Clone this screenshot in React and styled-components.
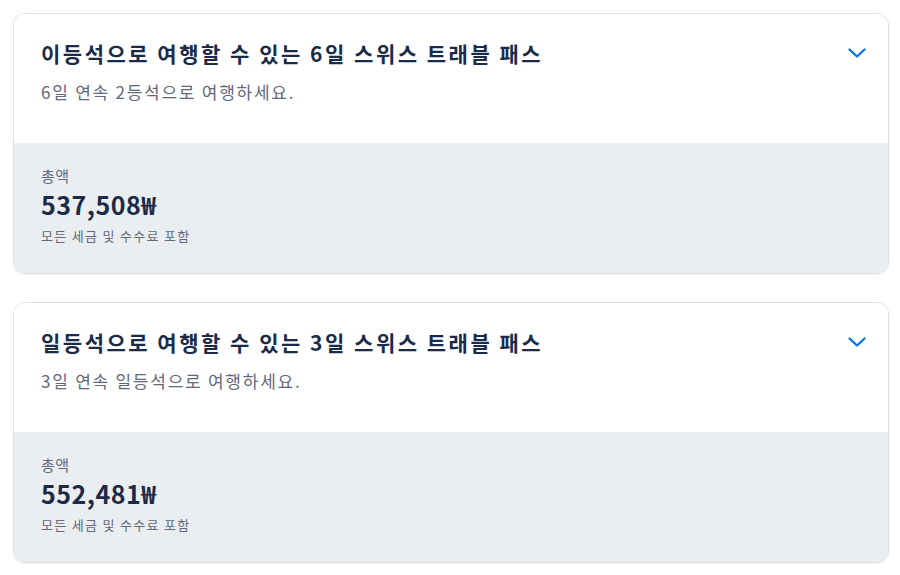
import React from "react";
import styled, { createGlobalStyle } from "styled-components";

const Global = createGlobalStyle`
  html, body { margin: 0; padding: 0; background: #fff; }
  body { font-family: "Noto Sans CJK KR", "Noto Sans", sans-serif; }
`;

const Page = styled.div`
  display: flex;
  flex-direction: column;
  gap: 28px;
  padding: 13px 11px 13px 13px;
`;

const Card = styled.div`
  border: 1px solid #dcdfe4;
  border-radius: 12px;
  overflow: hidden;
  box-shadow: 0 1px 2px rgba(26, 43, 73, 0.06);
`;

const Header = styled.div`
  display: flex;
  justify-content: space-between;
  align-items: flex-start;
  background: #fff;
  height: 129px;
  box-sizing: border-box;
  padding: 24px 19px 0 27px;
`;

const Texts = styled.div`
  display: flex;
  flex-direction: column;
  gap: 12px;
`;

const Title = styled.div`
  font-size: 21px;
  font-weight: 700;
  color: #1a2b49;
  line-height: 30px;
  letter-spacing: 2.5px;
`;

const Sub = styled.div`
  font-size: 17px;
  color: #63687a;
  line-height: 24px;
  letter-spacing: 1.75px;
`;

const Chevron = styled.svg`
  width: 24px;
  height: 24px;
  margin-top: 3px;
  color: #0071eb;
`;

const Footer = styled.div`
  background: #ebeef1;
  height: 130px;
  box-sizing: border-box;
  padding: 22px 27px 0;
  display: flex;
  flex-direction: column;
`;

const Label = styled.div`
  font-size: 15px;
  color: #63687a;
  line-height: 22px;
  letter-spacing: 0.5px;
`;

const Price = styled.div`
  font-size: 25px;
  font-weight: 700;
  color: #1a2b49;
  line-height: 32px;
  letter-spacing: 0.5px;
  margin-top: 1px;
`;

const Note = styled.div`
  font-size: 13px;
  color: #63687a;
  line-height: 18px;
  margin-top: 7px;
  letter-spacing: 1.3px;
`;

const items = [
  {
    title: "이등석으로 여행할 수 있는 6일 스위스 트래블 패스",
    sub: "6일 연속 2등석으로 여행하세요.",
    price: "537,508₩",
  },
  {
    title: "일등석으로 여행할 수 있는 3일 스위스 트래블 패스",
    sub: "3일 연속 일등석으로 여행하세요.",
    price: "552,481₩",
  },
];

export default function App() {
  return (
    <>
      <Global />
      <Page>
        {items.map((it) => (
          <Card key={it.title}>
            <Header>
              <Texts>
                <Title>{it.title}</Title>
                <Sub>{it.sub}</Sub>
              </Texts>
              <Chevron viewBox="0 0 24 24" fill="none" stroke="currentColor" strokeWidth="2.2" strokeLinecap="round" strokeLinejoin="round">
                <path d="M4.5 8.5l7.5 7 7.5-7" />
              </Chevron>
            </Header>
            <Footer>
              <Label>총액</Label>
              <Price>{it.price}</Price>
              <Note>모든 세금 및 수수료 포함</Note>
            </Footer>
          </Card>
        ))}
      </Page>
    </>
  );
}
